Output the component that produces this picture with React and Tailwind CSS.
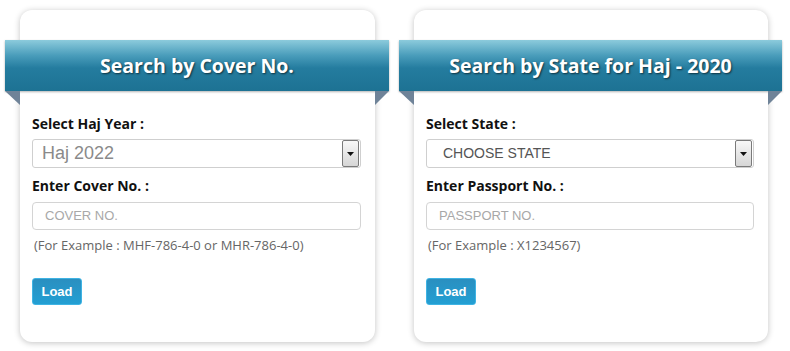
import React from "react";

function Ribbon({ title }) {
  return (
    <div className="relative -ml-[27px] -mr-[28px] h-[51px]">
      <div className="flex h-full items-center justify-center bg-[linear-gradient(to_bottom,#8ccbdc_0%,#4a9dbb_30%,#247c9f_55%,#1d7293_100%)] shadow-[0_1px_2px_rgba(0,0,0,0.3)]">
        <span className="font-['Open_Sans',sans-serif] text-[19.5px] font-bold text-white [text-shadow:1px_1px_2px_rgba(0,0,0,0.6)]">
          {title}
        </span>
      </div>
      <svg className="absolute left-0 top-[51px]" width="15" height="14" viewBox="0 0 15 14">
        <polygon points="0,0 15,0 15,14" fill="#6f8398" />
      </svg>
      <svg className="absolute right-0 top-[51px]" width="14" height="14" viewBox="0 0 14 14">
        <polygon points="0,0 14,0 0,14" fill="#6f8398" />
      </svg>
    </div>
  );
}

function SelectBox({ text, big }) {
  return (
    <div className="mt-[6px] flex h-[29px] items-center rounded-[3px] border border-[#cfcfcf] bg-white pr-[1px]">
      {big ? (
        <span className="flex-1 pl-[9px] font-['Liberation_Sans',Arial,sans-serif] text-[18px] text-[#8a8a8a]">{text}</span>
      ) : (
        <span className="flex-1 pl-[16px] font-['Liberation_Sans',Arial,sans-serif] text-[14px] text-[#555]">{text}</span>
      )}
      <div className="flex h-[27px] w-[17px] items-center justify-center rounded-[2px] border border-[#7a7a7a] bg-[linear-gradient(to_bottom,#f8f8f8,#d6d6d6)]">
        <svg width="7" height="4" viewBox="0 0 7 4">
          <polygon points="0,0 7,0 3.5,4" fill="#111" />
        </svg>
      </div>
    </div>
  );
}

function Card({ title, label1, selectText, big, label2, placeholder, example, width }) {
  return (
    <div className={`${width} rounded-[12px] bg-white pb-[37px] pl-[12px] pr-[14px] pt-[30px] shadow-[0_1px_6px_rgba(0,0,0,0.24)]`}>
      <Ribbon title={title} />
      <div className="mt-[24px] h-[18px] font-['Open_Sans',sans-serif] text-[14px] font-bold leading-[18px] text-[#111]">{label1}</div>
      <SelectBox text={selectText} big={big} />
      <div className="mt-[9px] h-[18px] font-['Open_Sans',sans-serif] text-[14px] font-bold leading-[18px] text-[#111]">{label2}</div>
      <div className="mt-[7px] flex h-[28px] items-center rounded-[4px] border border-[#d4d4d4] bg-white pl-[12px] font-['Liberation_Sans',Arial,sans-serif] text-[13px] text-[#a8a8a8]">
        {placeholder}
      </div>
      <div className="mt-[7px] h-[16px] pl-[2px] font-['Open_Sans',sans-serif] text-[13px] leading-[16px] text-[#666]">{example}</div>
      <div className="mt-[25px] flex h-[27px] w-[50px] items-center justify-center rounded-[3px] border border-[#3fb3e3] bg-[linear-gradient(to_bottom,#2a8fc0,#239fd3)] font-['Liberation_Sans',Arial,sans-serif] text-[13px] font-bold text-white">
        Load
      </div>
    </div>
  );
}

export default function App() {
  return (
    <div className="flex h-[351px] w-[790px] items-start gap-[39px] bg-white pl-[20px] pt-[10px]">
      <Card
        width="w-[355px]"
        title="Search by Cover No."
        label1="Select Haj Year :"
        selectText="Haj 2022"
        big
        label2="Enter Cover No. :"
        placeholder="COVER NO."
        example="(For Example : MHF-786-4-0 or MHR-786-4-0)"
      />
      <Card
        width="w-[354px]"
        title="Search by State for Haj - 2020"
        label1="Select State :"
        selectText="CHOOSE STATE"
        label2="Enter Passport No. :"
        placeholder="PASSPORT NO."
        example="(For Example : X1234567)"
      />
    </div>
  );
}
